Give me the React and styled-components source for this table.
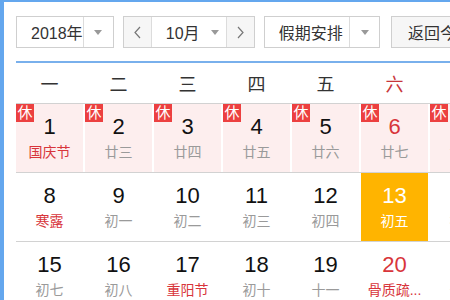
import styled, { createGlobalStyle } from "styled-components";

const GlobalStyle = createGlobalStyle`
  html, body {
    margin: 0;
    padding: 0;
    overflow: hidden;
    background: #fff;
  }
  body {
    font-family: "Liberation Sans", "Noto Sans CJK SC", sans-serif;
  }
`;

const Frame = styled.div`
  width: 450px;
  height: 300px;
  border-left: 4px solid #64a7ee;
  border-top: 2px solid #64a7ee;
  padding: 14px 0 0 12px;
  box-sizing: border-box;
  overflow: hidden;
`;

const Inner = styled.div`
  width: 483px;
`;

const Toolbar = styled.div`
  display: flex;
  align-items: center;
  height: 32px;
`;

const Select = styled.div`
  display: flex;
  height: 32px;
  width: ${({ $w }) => $w}px;
  box-sizing: border-box;
  border: 1px solid #cfcfcf;
  background: #fff;
  margin-right: ${({ $mr }) => $mr || 0}px;
  font-size: 16px;
  color: #333;
`;

const SelectText = styled.div`
  flex: 1;
  display: flex;
  align-items: center;
  padding-left: ${({ $pl }) => $pl}px;
  white-space: nowrap;
`;

const SelectArrow = styled.div`
  width: 29px;
  display: flex;
  align-items: center;
  justify-content: center;
  border-left: 1px solid #dcdcdc;
  &::after {
    content: "";
    border-left: 4px solid transparent;
    border-right: 4px solid transparent;
    border-top: 5px solid #999;
  }
`;

const MonthGroup = styled.div`
  display: flex;
  height: 32px;
  margin-right: 9px;
  border: 1px solid #cfcfcf;
  box-sizing: border-box;
  font-size: 16px;
  color: #333;
`;

const StepButton = styled.div`
  width: 27px;
  display: flex;
  align-items: center;
  justify-content: center;
  background: #f6f6f6;
  border-left: ${({ $divider }) => ($divider ? "1px solid #dcdcdc" : "none")};
  border-right: ${({ $rightDivider }) => ($rightDivider ? "1px solid #dcdcdc" : "none")};
`;

const MonthSelect = styled.div`
  width: 74px;
  display: flex;
  align-items: center;
  padding-left: 14px;
  box-sizing: border-box;
  gap: 11px;
  background: #fff;
  &::after {
    content: "";
    border-left: 4px solid transparent;
    border-right: 4px solid transparent;
    border-top: 5px solid #999;
  }
`;

const ReturnButton = styled.div`
  height: 32px;
  width: 110px;
  box-sizing: border-box;
  border: 1px solid #cfcfcf;
  background: #f6f6f6;
  display: flex;
  align-items: center;
  padding-left: 16px;
  font-size: 16px;
  color: #333;
  white-space: nowrap;
`;

const BlueRule = styled.div`
  height: 2px;
  background: #79b0ec;
  margin-top: 13px;
`;

const WeekHeader = styled.div`
  display: grid;
  grid-template-columns: repeat(7, 67px);
  column-gap: 2px;
  height: 40px;
  align-items: center;
  border-bottom: 1px solid #d2d2d2;
`;

const WeekDay = styled.div`
  text-align: center;
  font-size: 18px;
  color: ${({ $weekend }) => ($weekend ? "#c8363b" : "#333")};
`;

const Row = styled.div`
  display: grid;
  grid-template-columns: repeat(7, 67px);
  column-gap: 2px;
  height: 68px;
  border-bottom: 1px solid #d2d2d2;
`;

const Cell = styled.div`
  position: relative;
  display: flex;
  flex-direction: column;
  align-items: center;
  padding-top: 11px;
  box-sizing: border-box;
  background: ${({ $today, $rest }) =>
    $today ? "#ffb400" : $rest ? "#fdeeee" : "#fff"};
`;

const DayNum = styled.div`
  font-size: 22px;
  line-height: 24px;
  color: ${({ $today, $red }) => ($today ? "#fff" : $red ? "#d8353b" : "#111")};
`;

const Lunar = styled.div`
  margin-top: 4px;
  font-size: 14px;
  line-height: 18px;
  white-space: nowrap;
  color: ${({ $today, $red }) => ($today ? "#fff" : $red ? "#d8353b" : "#9a9a9a")};
`;

const RestBadge = styled.span`
  position: absolute;
  left: 0;
  top: 0;
  width: 18px;
  height: 18px;
  background: #ec4040;
  color: #fff;
  font-size: 15px;
  line-height: 18px;
  text-align: center;
`;

function Chevron({ dir }) {
  const d = dir === "left" ? "M7 1 L2 6.5 L7 12" : "M2 1 L7 6.5 L2 12";
  return (
    <svg width="9" height="13" viewBox="0 0 9 13">
      <path d={d} fill="none" stroke="#777" strokeWidth="1.2" />
    </svg>
  );
}

const weekDays = ["一", "二", "三", "四", "五", "六", "日"];

const weeks = [
  [
    { n: 1, l: "国庆节", lr: true, rest: true },
    { n: 2, l: "廿三", rest: true },
    { n: 3, l: "廿四", rest: true },
    { n: 4, l: "廿五", rest: true },
    { n: 5, l: "廿六", rest: true },
    { n: 6, l: "廿七", rest: true },
    { n: 7, l: "廿八", rest: true },
  ],
  [
    { n: 8, l: "寒露", lr: true },
    { n: 9, l: "初一" },
    { n: 10, l: "初二" },
    { n: 11, l: "初三" },
    { n: 12, l: "初四" },
    { n: 13, l: "初五", today: true },
    { n: 14, l: "初六" },
  ],
  [
    { n: 15, l: "初七" },
    { n: 16, l: "初八" },
    { n: 17, l: "重阳节", lr: true },
    { n: 18, l: "初十" },
    { n: 19, l: "十一" },
    { n: 20, l: "骨质疏...", lr: true },
    { n: 21, l: "十三" },
  ],
];

export default function App() {
  return (
    <>
      <GlobalStyle />
      <Frame>
        <Inner>
          <Toolbar>
            <Select $w={100} $mr={9}>
              <SelectText $pl={14}>2018年</SelectText>
              <SelectArrow />
            </Select>
            <MonthGroup>
              <StepButton $rightDivider>
                <Chevron dir="left" />
              </StepButton>
              <MonthSelect>10月</MonthSelect>
              <StepButton $divider>
                <Chevron dir="right" />
              </StepButton>
            </MonthGroup>
            <Select $w={119} $mr={11}>
              <SelectText $pl={14}>假期安排</SelectText>
              <SelectArrow />
            </Select>
            <ReturnButton>返回今天</ReturnButton>
          </Toolbar>
          <BlueRule />
          <WeekHeader>
            {weekDays.map((d, i) => (
              <WeekDay key={d} $weekend={i >= 5}>
                {d}
              </WeekDay>
            ))}
          </WeekHeader>
          {weeks.map((week, wi) => (
            <Row key={wi}>
              {week.map((day, di) => (
                <Cell key={day.n} $rest={day.rest} $today={day.today}>
                  {day.rest && <RestBadge>休</RestBadge>}
                  <DayNum $today={day.today} $red={di >= 5}>
                    {day.n}
                  </DayNum>
                  <Lunar $today={day.today} $red={day.lr}>
                    {day.l}
                  </Lunar>
                </Cell>
              ))}
            </Row>
          ))}
        </Inner>
      </Frame>
    </>
  );
}
